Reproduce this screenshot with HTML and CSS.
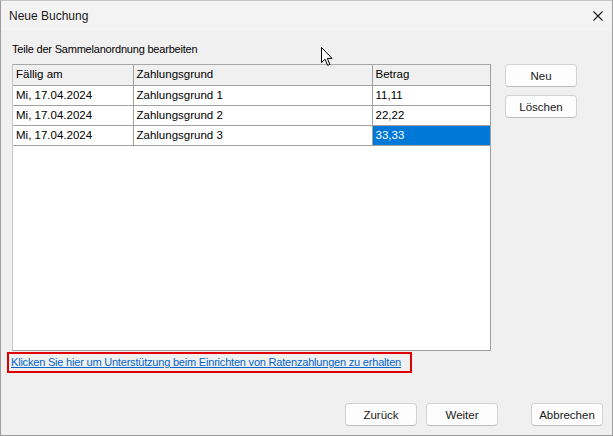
FILE: index.html
```html
<!DOCTYPE html>
<html lang="de">
<head>
    <meta charset="UTF-8">
    <meta name="viewport" content="width=device-width, initial-scale=1.0">
    <title>Neue Buchung</title>
    <link rel="stylesheet" href="styles.css">
</head>
<body>

    <div class="window">
        <div class="titlebar">
            <span class="title">Neue Buchung</span>
            <svg class="close" width="10" height="10" viewBox="0 0 10 10">
                <path d="M0.5 0.5 L9.5 9.5 M9.5 0.5 L0.5 9.5" stroke="#1b1b1b" stroke-width="1.1" fill="none"/>
            </svg>
        </div>

        <div class="content">
            <div class="caption">Teile der Sammelanordnung bearbeiten</div>

            <div class="main">
                <div class="grid">
                    <table>
                        <tr class="head">
                            <td class="col1">Fällig am</td>
                            <td class="col2">Zahlungsgrund</td>
                            <td class="col3">Betrag</td>
                        </tr>
                        <tr>
                            <td>Mi, 17.04.2024</td>
                            <td>Zahlungsgrund 1</td>
                            <td>11,11</td>
                        </tr>
                        <tr>
                            <td>Mi, 17.04.2024</td>
                            <td>Zahlungsgrund 2</td>
                            <td>22,22</td>
                        </tr>
                        <tr>
                            <td>Mi, 17.04.2024</td>
                            <td>Zahlungsgrund 3</td>
                            <td class="selected">33,33</td>
                        </tr>
                    </table>
                </div>

                <div class="side">
                    <button>Neu</button>
                    <button>Löschen</button>
                </div>
            </div>

            <div class="help">
                <a href="#">Klicken Sie hier um Unterstützung beim Einrichten von Ratenzahlungen zu erhalten</a>
            </div>

            <div class="footer">
                <button>Zurück</button>
                <button>Weiter</button>
                <button class="cancel">Abbrechen</button>
            </div>
        </div>

        <svg class="cursor" width="13" height="20" viewBox="0 0 13 20">
            <path d="M0.5 0.5 L0.5 15.5 L4 12.2 L6.6 18.3 L8.8 17.4 L6.3 11.4 L11 11.4 Z" fill="#ffffff" stroke="#000000" stroke-width="1" stroke-linejoin="miter"/>
        </svg>
    </div>

</body>
</html>
```

FILE: styles.css
```css
* {
    box-sizing: border-box;
}

body {
    margin: 0;
    font-family: "Liberation Sans", Arial, sans-serif;
    font-size: 11px;
    color: #000;
    background: #f0f0f0;
}

.window {
    position: relative;
    width: 613px;
    height: 436px;
    border: 1px solid #9c9c9c;
    border-top-color: #c4c4c4;
    display: flex;
    flex-direction: column;
    background: #f0f0f0;
}

.titlebar {
    height: 30px;
    display: flex;
    align-items: center;
    justify-content: space-between;
    padding: 0 9px 1px 8px;
    background: #f3f3f3;
}

.title {
    font-size: 12px;
    color: #1a1a1a;
}

.close {
    display: block;
}

.content {
    flex: 1;
    padding: 11px 9px 9px 11px;
    display: flex;
    flex-direction: column;
}

.caption {
    line-height: 14px;
    height: 14px;
    margin-bottom: 8px;
    letter-spacing: -0.2px;
}

.main {
    display: flex;
    align-items: flex-start;
}

.grid {
    width: 479px;
    height: 287px;
    background: #fff;
    border: 1px solid #a0a0a0;
    border-top-color: #a8a8a8;
    border-left-color: #c8c8c8;
}

table {
    border-collapse: collapse;
    table-layout: fixed;
    width: 477px;
    font-size: 11.5px;
}

td {
    height: 20px;
    padding: 0 0 1px 3px;
    border-right: 1px solid #a0a0a0;
    border-bottom: 1px solid #a0a0a0;
    white-space: nowrap;
    line-height: 18px;
}

td:last-child {
    border-right: none;
}

.col1 {
    width: 120px;
}

.col2 {
    width: 239px;
}

.col3 {
    width: 118px;
}

.head td {
    background: #f0f0f0;
}

td.selected {
    background: #0078d7;
    color: #fff;
}

.side {
    margin-left: 14px;
    display: flex;
    flex-direction: column;
    gap: 8px;
}

button {
    width: 72px;
    height: 23px;
    padding: 0;
    font-family: inherit;
    font-size: 11.5px;
    color: #1a1a1a;
    background: #fdfdfd;
    border: 1px solid #d3d3d3;
    border-bottom-color: #bdbdbd;
    border-radius: 4px;
}

.help {
    width: 405px;
    height: 21px;
    margin: 1px 0 0 -5px;
    padding-left: 2px;
    border: 2px solid #e00000;
    line-height: 16px;
    white-space: nowrap;
    letter-spacing: -0.2px;
}

.help a {
    color: #0066cc;
}

.footer {
    margin-top: auto;
    display: flex;
    justify-content: flex-end;
}

.footer button + button {
    margin-left: 9px;
}

.footer .cancel {
    margin-left: 33px;
}

.cursor {
    position: absolute;
    left: 320px;
    top: 46px;
}
```
